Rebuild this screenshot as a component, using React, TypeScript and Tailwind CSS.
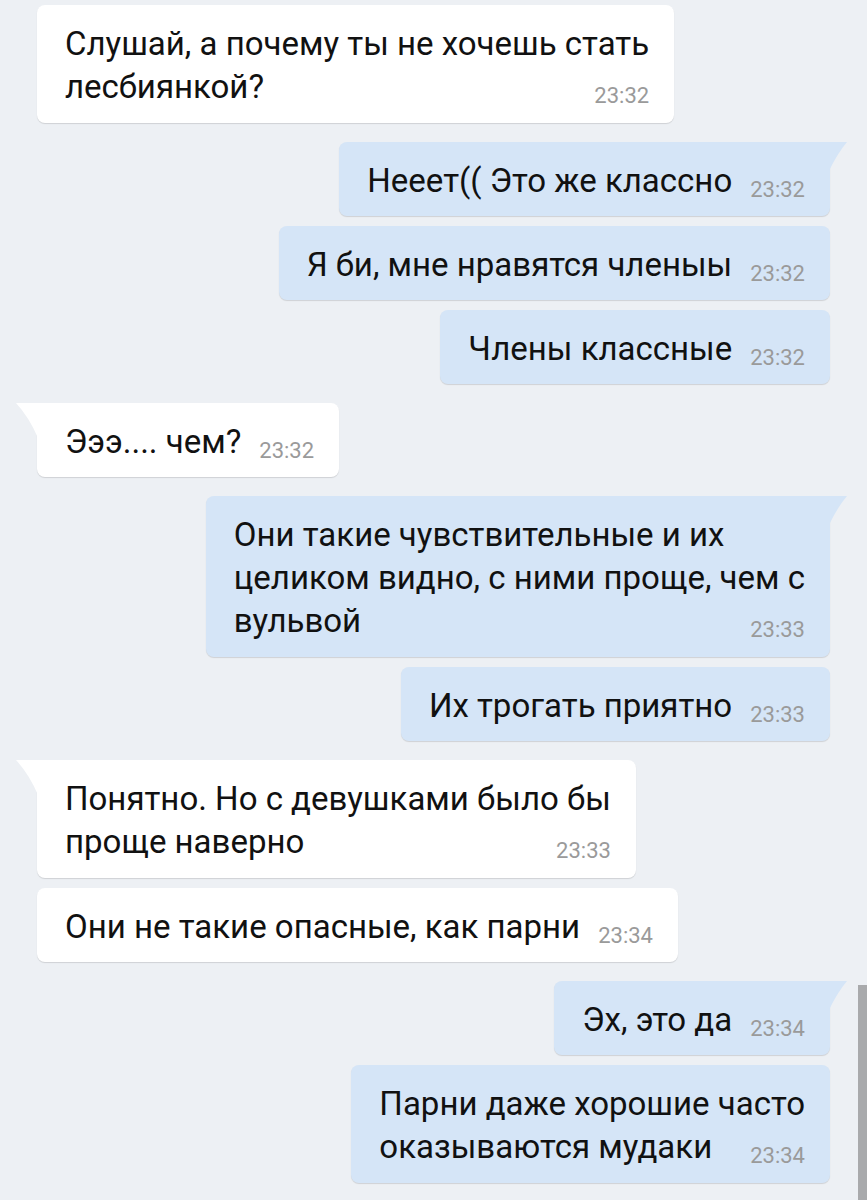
import React from "react";

type Msg = {
  lines: string[];
  time: string;
  tail?: boolean;
};

type Group = { out?: boolean; msgs: Msg[] };

const groups: Group[] = [
  { msgs: [{ lines: ["Слушай, а почему ты не хочешь стать", "лесбиянкой?"], time: "23:32" }] },
  {
    out: true,
    msgs: [
      { lines: ["Нееет(( Это же классно"], time: "23:32", tail: true },
      { lines: ["Я би, мне нравятся членыы"], time: "23:32" },
      { lines: ["Члены классные"], time: "23:32" },
    ],
  },
  { msgs: [{ lines: ["Эээ.... чем?"], time: "23:32", tail: true }] },
  {
    out: true,
    msgs: [
      {
        lines: ["Они такие чувствительные и их", "целиком видно, с ними проще, чем с", "вульвой"],
        time: "23:33",
        tail: true,
      },
      { lines: ["Их трогать приятно"], time: "23:33" },
    ],
  },
  {
    msgs: [
      { lines: ["Понятно. Но с девушками было бы", "проще наверно"], time: "23:33", tail: true },
      { lines: ["Они не такие опасные, как парни"], time: "23:34" },
    ],
  },
  {
    out: true,
    msgs: [
      { lines: ["Эх, это да"], time: "23:34", tail: true },
      { lines: ["Парни даже хорошие часто", "оказываются мудаки"], time: "23:34" },
    ],
  },
];

function Tail({ out }: { out?: boolean }) {
  if (out) {
    return (
      <svg className="absolute -right-[17px] top-0" width="18" height="30" viewBox="0 0 18 30">
        <path d="M0 0 H18 Q8 12 0 29 Z" fill="#d5e5f7" />
      </svg>
    );
  }
  return (
    <svg className="absolute -left-[21px] top-0" width="22" height="36" viewBox="0 0 22 36">
      <path d="M22 0 H0 Q13 14 22 35 Z" fill="#ffffff" />
    </svg>
  );
}

function Bubble({ m, out }: { m: Msg; out?: boolean }) {
  const first = m.lines.slice(0, -1);
  const last = m.lines[m.lines.length - 1];
  const multi = m.lines.length > 1;
  return (
    <div
      className={`relative flex flex-col rounded-lg pl-7 pr-[25px] pt-[17px] text-[33px] leading-[43px] text-[#111] whitespace-nowrap shadow-[0_1px_1px_rgba(0,0,0,0.13)] ${
        out ? "self-end bg-[#d5e5f7]" : "self-start bg-white"
      } ${m.tail ? (out ? "rounded-tr-none" : "rounded-tl-none") : ""} ${multi ? "pb-[15px]" : "pb-[14px]"}`}
    >
      {m.tail && <Tail out={out} />}
      {first.map((l, i) => (
        <div key={i}>{l}</div>
      ))}
      <div className={`flex items-end ${multi ? "justify-between" : ""} gap-[18px]`}>
        <span>{last}</span>
        <span className="pb-[1px] text-[22px] leading-none text-[#9a9a9a]">{m.time}</span>
      </div>
    </div>
  );
}

export default function App() {
  return (
    <div
      className="relative w-[867px] h-[1200px] overflow-hidden bg-[#edf0f4] px-[37px] pt-[5px]"
      style={{ fontFamily: "Roboto, 'Noto Sans', sans-serif" }}
    >
      <div className="flex flex-col gap-[19px]">
        {groups.map((g, i) => (
          <div key={i} className="flex flex-col gap-[10px]">
            {g.msgs.map((m, j) => (
              <Bubble key={j} m={m} out={g.out} />
            ))}
          </div>
        ))}
      </div>
      <div className="absolute right-0 top-[985px] h-[215px] w-[9px] bg-[#a9aaac]" />
    </div>
  );
}
